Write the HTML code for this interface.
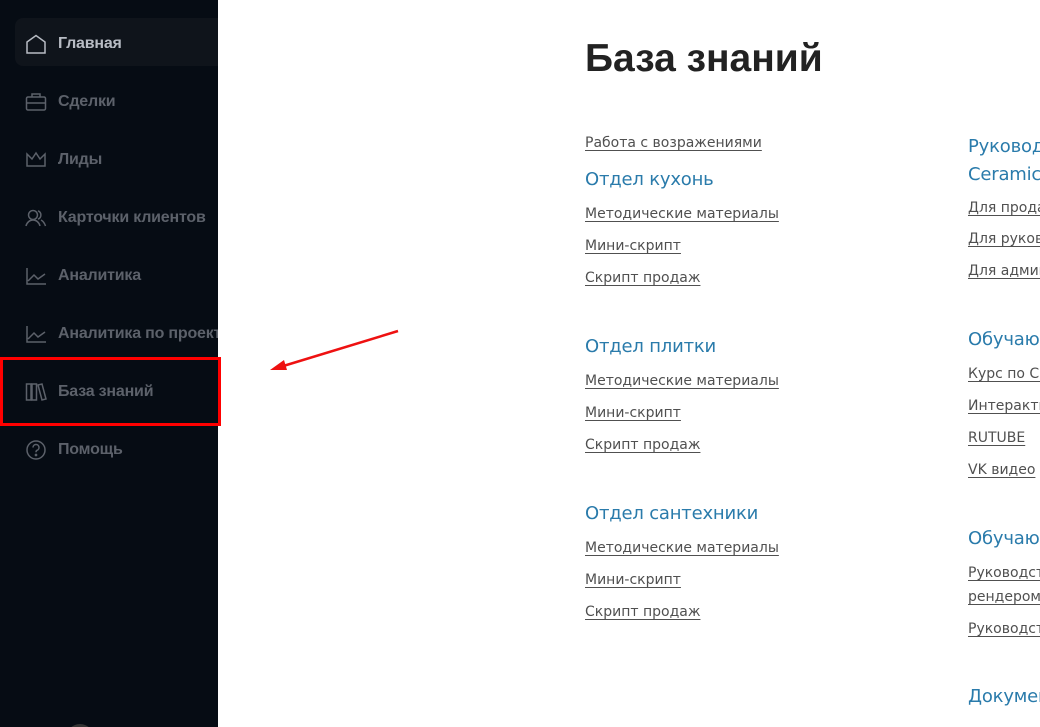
<!DOCTYPE html>
<html><head><meta charset="utf-8"><style>
*{margin:0;padding:0;box-sizing:border-box}
html,body{width:1040px;height:727px;overflow:hidden}
body{background:#fff;position:relative;font-family:"Liberation Sans",sans-serif}
#sb{position:absolute;left:0;top:0;width:218px;height:727px;background:#060c14;overflow:hidden}
.act{position:absolute;left:15px;top:18px;width:210px;height:48px;background:#0f141b;border-radius:8px}
.it{position:absolute;left:58px;font-size:16px;font-weight:bold;color:#5c616a;white-space:nowrap;letter-spacing:-0.2px}
.ic{position:absolute;left:25px}
.red{position:absolute;left:0;top:357px;width:221px;height:69px;border:3px solid #ff0000}
.t{position:absolute;white-space:nowrap;font-family:"DejaVu Sans","Liberation Sans",sans-serif}
.l{font-size:14px;color:#505050;text-decoration:underline;text-underline-offset:3px}
.h{font-size:18px;color:#2a7bab;letter-spacing:-0.2px}
#main{position:absolute;left:218px;top:0;width:822px;height:727px;overflow:hidden}
</style></head><body>
<div id="sb">
<div class="act"></div>
<svg class="ic" style="top:34px" width="22" height="20" viewBox="0 0 22 20" fill="none" stroke="#b8bcc4" stroke-width="1.5"><path d="M2 8 L11 1.5 L20 8 V19 H2 Z"/></svg>
<div class="it" style="top:35px;color:#b8bcc4">Главная</div>
<svg class="ic" style="top:92px" width="22" height="20" viewBox="0 0 22 20" fill="none" stroke="#5c616a" stroke-width="1.5"><rect x="1.5" y="5" width="19" height="13" rx="1.5"/><path d="M7 5V2h8v3M1.5 11h19"/></svg>
<div class="it" style="top:93px">Сделки</div>
<svg class="ic" style="top:150px" width="22" height="20" viewBox="0 0 22 20" fill="none" stroke="#5c616a" stroke-width="1.5"><path d="M2 4 L7 9 L11 3 L15 9 L20 4 V16 H2 Z"/></svg>
<div class="it" style="top:151px">Лиды</div>
<svg class="ic" style="top:208px" width="22" height="20" viewBox="0 0 22 20" fill="none" stroke="#5c616a" stroke-width="1.5"><circle cx="8" cy="7" r="4.5"/><path d="M1 18c1-4 4-6 7-6s6 2 7 6M13 2.8a4.5 4.5 0 0 1 0 8.4M16 12c2 1 3.5 3 4.5 6"/></svg>
<div class="it" style="top:209px">Карточки клиентов</div>
<svg class="ic" style="top:266px" width="22" height="20" viewBox="0 0 22 20" fill="none" stroke="#5c616a" stroke-width="1.5"><path d="M2 2V18H21M3 15L9 9L13 13L20 8"/></svg>
<div class="it" style="top:267px">Аналитика</div>
<svg class="ic" style="top:324px" width="22" height="20" viewBox="0 0 22 20" fill="none" stroke="#5c616a" stroke-width="1.5"><path d="M2 2V18H21M3 15L9 9L13 13L20 8"/></svg>
<div class="it" style="top:325px">Аналитика по проектам</div>
<svg class="ic" style="top:382px" width="22" height="20" viewBox="0 0 22 20" fill="none" stroke="#5c616a" stroke-width="1.5"><rect x="1.5" y="2" width="4.5" height="16"/><rect x="7" y="2" width="4.5" height="16"/><path d="M13 3l4-1 4 15-4 1z"/></svg>
<div class="it" style="top:383px">База знаний</div>
<svg class="ic" style="top:440px" width="22" height="20" viewBox="0 0 22 20" fill="none" stroke="#5c616a" stroke-width="1.5"><circle cx="11" cy="10" r="9"/><path d="M8 7.5a3 3 0 1 1 4 2.8c-.8.4-1 1-1 2"/><circle cx="11" cy="15" r=".6" fill="#5c616a"/></svg>
<div class="it" style="top:441px">Помощь</div>
<div style="position:absolute;left:66px;top:724px;width:28px;height:28px;border-radius:50%;background:#333"></div>
</div>
<div class="red"></div>
<svg style="position:absolute;left:260px;top:325px" width="145" height="52"><line x1="138" y1="6" x2="20" y2="42" stroke="#ee1111" stroke-width="2.5"/><path d="M10 45 L24 35 L27 45 Z" fill="#ee1111"/></svg>

<div id="main">
<div style="position:absolute;left:367px;top:37px;font-size:39px;font-weight:bold;color:#222;white-space:nowrap;font-family:'Liberation Sans',sans-serif">База знаний</div>

<div class="t l" style="left:367px;top:135px">Работа с возражениями</div>
<div class="t h" style="left:367px;top:169px">Отдел кухонь</div>
<div class="t l" style="left:367px;top:206px">Методические материалы</div>
<div class="t l" style="left:367px;top:238px">Мини-скрипт</div>
<div class="t l" style="left:367px;top:270px">Скрипт продаж</div>

<div class="t h" style="left:367px;top:336px">Отдел плитки</div>
<div class="t l" style="left:367px;top:373px">Методические материалы</div>
<div class="t l" style="left:367px;top:405px">Мини-скрипт</div>
<div class="t l" style="left:367px;top:437px">Скрипт продаж</div>

<div class="t h" style="left:367px;top:503px">Отдел сантехники</div>
<div class="t l" style="left:367px;top:540px">Методические материалы</div>
<div class="t l" style="left:367px;top:572px">Мини-скрипт</div>
<div class="t l" style="left:367px;top:604px">Скрипт продаж</div>

<div class="t h" style="left:750px;top:136px">Руководство</div>
<div class="t h" style="left:750px;top:164px">Ceramica 3D</div>
<div class="t l" style="left:750px;top:200px">Для продавцов</div>
<div class="t l" style="left:750px;top:231px">Для руководителей</div>
<div class="t l" style="left:750px;top:263px">Для администраторов</div>

<div class="t h" style="left:750px;top:329px">Обучающие</div>
<div class="t l" style="left:750px;top:366px">Курс по Ceramic</div>
<div class="t l" style="left:750px;top:398px">Интерактивный</div>
<div class="t l" style="left:750px;top:430px">RUTUBE</div>
<div class="t l" style="left:750px;top:462px">VK видео</div>

<div class="t h" style="left:750px;top:528px">Обучающие</div>
<div class="t l" style="left:750px;top:565px">Руководство</div>
<div class="t l" style="left:750px;top:589px">рендером</div>
<div class="t l" style="left:750px;top:621px">Руководство</div>

<div class="t h" style="left:750px;top:686px">Документы</div>
</div>
</body></html>
